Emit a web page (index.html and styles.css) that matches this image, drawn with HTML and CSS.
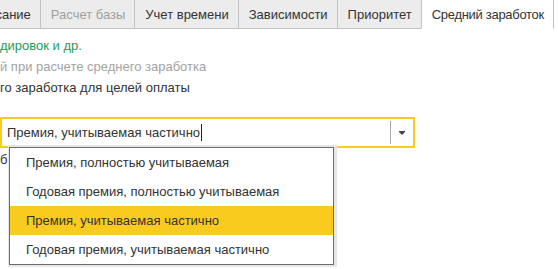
FILE: index.html
```html
<!DOCTYPE html>
<html lang="ru">
<head>
    <meta charset="UTF-8">
    <link rel="stylesheet" href="styles.css">
    <title>Средний заработок</title>
</head>
<body>
    <div class="tabs">
        <div class="tab">Описание</div>
        <div class="tab disabled">Расчет базы</div>
        <div class="tab">Учет времени</div>
        <div class="tab">Зависимости</div>
        <div class="tab">Приоритет</div>
        <div class="tab active">Средний заработок</div>
    </div>

    <div class="page">
        <p class="line green">дировок и др.</p>
        <p class="line grey">й при расчете среднего заработка</p>
        <p class="line">го заработка для целей оплаты</p>

        <div class="combo-wrap">
            <div class="combo">
                <div class="combo-text">Премия, учитываемая частично<span class="caret"></span></div>
                <div class="combo-btn"><span class="arrow"></span></div>
            </div>
            <!-- выпадающий список -->
            <ul class="dropdown">
                <li>Премия, полностью учитываемая</li>
                <li>Годовая премия, полностью учитываемая</li>
                <li class="selected">Премия, учитываемая частично</li>
                <li>Годовая премия, учитываемая частично</li>
            </ul>
        </div>
        <div class="line below">б</div>
    </div>
</body>
</html>
```

FILE: styles.css
```css
body {
    font-family: "Liberation Sans", Arial, sans-serif;
    font-size: 13px;
    color: #333;
    margin: 0;
    padding: 0;
    background-color: white;
}

.tabs {
    display: flex;
    margin-top: -2px;
    margin-left: -39px;
}

.tab {
    background-color: #ececec;
    border: 1px solid #c2c2c2;
    margin-left: -1px;
    padding: 2px 9px 0 10px;
    line-height: 27px;
    white-space: nowrap;
}

.tab.disabled {
    color: #a0a0a0;
}

.tab.active {
    background-color: white;
    border-bottom-color: white;
    letter-spacing: -0.3px;
}

.page {
    padding-top: 6px;
    height: 240px;
}

.line {
    margin: 0;
    line-height: 21px;
    white-space: nowrap;
}

.green {
    color: #1e9b5c;
}

.grey {
    color: #a3a3a3;
}

.combo-wrap {
    position: relative;
    width: 415px;
    margin-top: 19px;
}

.combo {
    display: flex;
    align-items: center;
    height: 27px;
    border: 2px solid #f9cb1f;
}

.combo-text {
    flex: 1;
    padding-left: 5px;
    display: flex;
    align-items: center;
}

.caret {
    display: inline-block;
    width: 1px;
    height: 17px;
    margin-left: 1px;
    background-color: #222;
}

.combo-btn {
    width: 22px;
    height: 23px;
    border-left: 1px solid #a8a8a8;
    display: flex;
    justify-content: center;
    align-items: center;
}

.arrow {
    display: block;
    width: 0;
    height: 0;
    border-left: 3px solid transparent;
    border-right: 3px solid transparent;
    border-top: 3px solid #444;
    box-shadow: 0 -1px 0 0 #444;
    margin-top: 1px;
}

/* список поверх поля */
.dropdown {
    position: absolute;
    top: 30px;
    left: 9px;
    width: 323px;
    margin: 0;
    padding: 0;
    list-style: none;
    background-color: white;
    border: 1px solid #6b6b6b;
    box-shadow: 1px 0 0 2px #e6e6e6;
}

.dropdown li {
    height: 29px;
    line-height: 29px;
    padding-left: 16px;
    white-space: nowrap;
}

.dropdown li.selected {
    background-color: #f9cb1f;
}

.below {
    margin-top: 1px;
}
```
